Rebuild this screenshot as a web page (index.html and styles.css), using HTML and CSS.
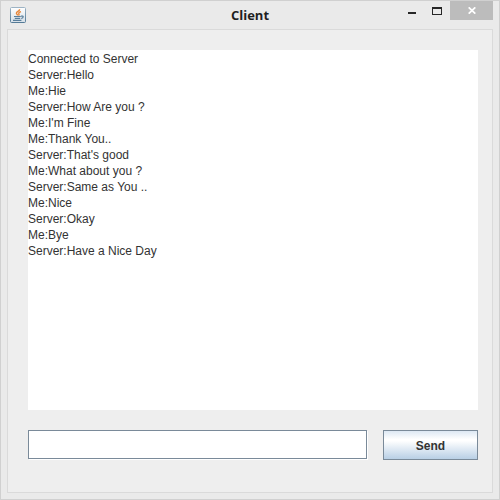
FILE: index.html
```
<!DOCTYPE html>
<html lang="en">
<head>
<meta charset="utf-8">
<title>Client</title>
<link rel="stylesheet" href="styles.css">
</head>
<body>
<div class="window">
  <header class="titlebar">
    <svg class="app-icon" width="16" height="16" viewBox="0 0 16 16" aria-hidden="true">
      <defs>
        <linearGradient id="tile" x1="0" y1="0" x2="0" y2="1">
          <stop offset="0" stop-color="#ffffff"/>
          <stop offset="1" stop-color="#d5dfe7"/>
        </linearGradient>
        <linearGradient id="edge" x1="0" y1="0" x2="0" y2="1">
          <stop offset="0" stop-color="#9db3c4"/>
          <stop offset="1" stop-color="#557b97"/>
        </linearGradient>
      </defs>
      <rect x="0.5" y="0.5" width="15" height="15" rx="1" fill="url(#tile)" stroke="url(#edge)"/>
      <path d="M9.6 2.2C9.8 4.2 6 4.4 6.4 6.3C6.6 7.1 7.6 7.5 7.7 8.4M11 4.6C8.9 5.2 8.3 6 9 7C9.3 7.5 9.1 7.9 8.6 8.4" fill="none" stroke="#e8873a" stroke-width="1.4"/>
      <path d="M4 9.5H10.8M4.8 11.4H10.2M3 13.4H11.4M11 9.2C14 8.4 13.8 11 11.2 11.5" fill="none" stroke="#5a7f9c" stroke-width="1.2"/>
    </svg>
    <h1 class="title">Client</h1>
    <div class="controls">
      <button class="control minimize" type="button" aria-label="Minimize">
        <svg width="8" height="2" viewBox="0 0 8 2"><path d="M0 0H8V2H0Z" fill="#272727"/></svg>
      </button>
      <button class="control maximize" type="button" aria-label="Maximize">
        <svg width="10" height="8" viewBox="0 0 10 8"><path d="M0 0H10V8H0ZM1 2V7H9V2Z" fill="#272727" fill-rule="evenodd"/></svg>
      </button>
      <button class="control close" type="button" aria-label="Close">
        <svg width="8" height="7" viewBox="0 0 8 7"><path d="M0.7 0.3L7.3 6.7M7.3 0.3L0.7 6.7" stroke="#fff" stroke-width="1.7"/></svg>
      </button>
    </div>
  </header>
  <main class="panel">
    <div class="log" role="log">
      <p>Connected to Server</p>
      <p>Server:Hello</p>
      <p>Me:Hie</p>
      <p>Server:How Are you ?</p>
      <p>Me:I'm Fine</p>
      <p>Me:Thank You..</p>
      <p>Server:That's good</p>
      <p>Me:What about you ?</p>
      <p>Server:Same as You ..</p>
      <p>Me:Nice</p>
      <p>Server:Okay</p>
      <p>Me:Bye</p>
      <p>Server:Have a Nice Day</p>
    </div>
    <form class="composer">
      <input class="message" type="text" aria-label="Message">
      <button class="send" type="button">Send</button>
    </form>
  </main>
</div>
</body>
</html>
```
FILE: styles.css
```
* {
  box-sizing: border-box;
}

body {
  margin: 0;
  font-family: "Liberation Sans", Arial, sans-serif;
  font-size: 12px;
  color: #333;
}

.window {
  display: flex;
  flex-direction: column;
  min-height: 100vh;
  padding: 0 6px 6px;
  border: 1px solid #d0d0d0;
  background: #eaeaea;
}

.titlebar {
  display: grid;
  grid-template-columns: 1fr auto 1fr;
  height: 28px;
}

.app-icon {
  margin: 6px 0 0 3px;
}

.title {
  margin: 0;
  font-family: "Open Sans", "Noto Sans", sans-serif;
  font-size: 13px;
  font-weight: 700;
  line-height: 28px;
  color: #1f1f1f;
}

.controls {
  display: flex;
  justify-content: flex-end;
}

.control {
  display: flex;
  align-items: center;
  justify-content: center;
  width: 25px;
  height: 19px;
  padding: 0;
  border: 0;
  background: none;
}

.minimize {
  align-items: flex-end;
  padding-bottom: 6px;
}

.close {
  width: 43px;
  margin-left: 1px;
  background: #bcbcbc;
}

.panel {
  display: flex;
  flex: 1;
  flex-direction: column;
  gap: 20px;
  padding: 20px 14px 32px 20px;
  border: 1px solid #dadada;
  background: #eee;
}

.log {
  flex: 1;
  padding-top: 1px;
  background: #fff;
  line-height: 16px;
}

.log p {
  margin: 0;
}

.composer {
  display: flex;
  gap: 15px;
  height: 30px;
}

.message {
  flex: 1;
  min-width: 0;
  padding: 2px 4px;
  border: 1px solid #7a8a99;
  border-radius: 0;
  margin: 0 1px 1px 0;
  background: #fff;
  box-shadow: 1px 1px #fff;
  font: inherit;
}

.send {
  width: 95px;
  padding: 2px 0 0;
  border: 1px solid #7a8a99;
  background: linear-gradient(#dde8f3, #fff 30%, #fff 35%, #b8cfe5);
  color: #333;
  font: bold 12px "Liberation Sans", Arial, sans-serif;
}
```
